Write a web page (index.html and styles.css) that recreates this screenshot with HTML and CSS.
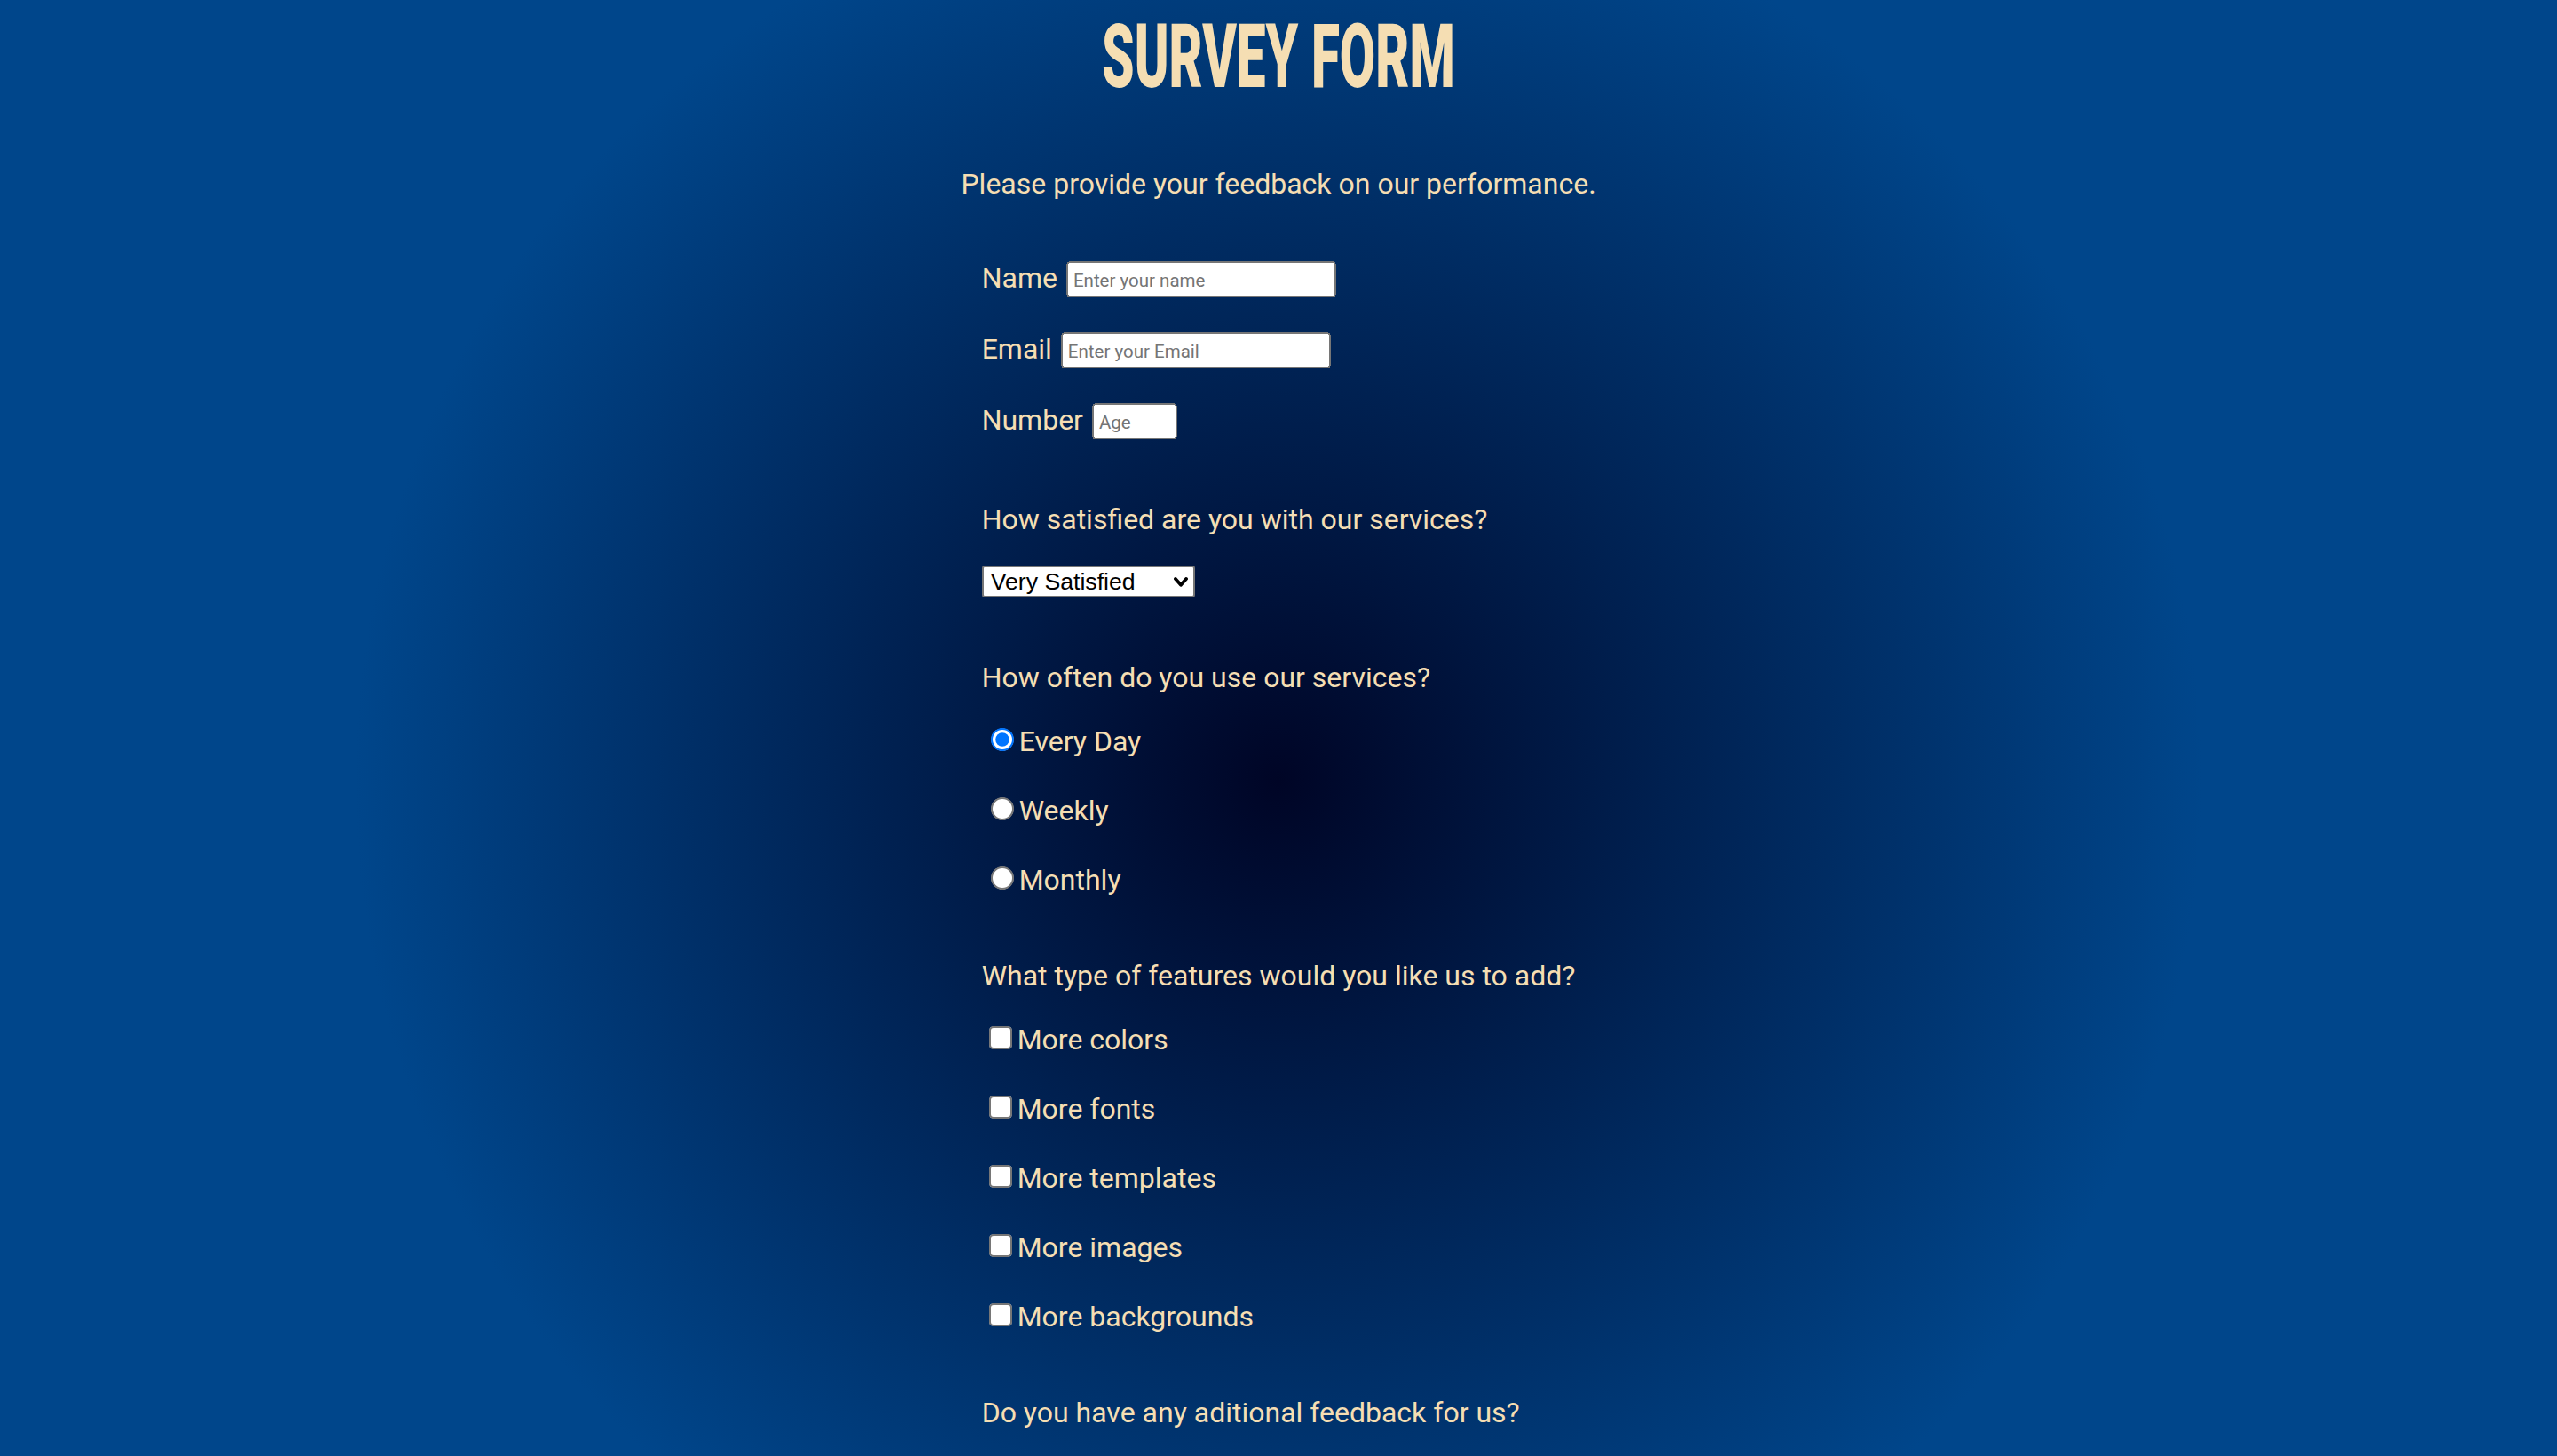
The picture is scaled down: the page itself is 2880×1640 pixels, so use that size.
FILE: index.html
```html
<!DOCTYPE html>
<html lang="en">
<head>
<meta charset="utf-8">
<title>Survey Form</title>
<link rel="stylesheet" href="styles.css">
</head>
<body>
  <h1 class="title"><span class="title-text">Survey Form</span></h1>
  <p class="intro">Please provide your feedback on our performance.</p>
  <form class="survey">
    <div class="field">
      <label for="name">Name</label>
      <input id="name" class="text-input" type="text" placeholder="Enter your name">
    </div>
    <div class="field">
      <label for="email">Email</label>
      <input id="email" class="text-input" type="email" placeholder="Enter your Email">
    </div>
    <div class="field">
      <label for="age">Number</label>
      <input id="age" class="text-input age-input" type="number" min="1" max="120" placeholder="Age">
    </div>

    <p class="question question-first">How satisfied are you with our services?</p>
    <span class="select-wrap">
      <select class="rating" name="rating">
        <option>Very Satisfied</option>
        <option>Satisfied</option>
        <option>Neutral</option>
        <option>Unsatisfied</option>
        <option>Very Unsatisfied</option>
      </select>
      <svg class="select-arrow" width="8" height="6" viewBox="0 0 8 6" aria-hidden="true">
        <polyline points="1,1 4,4.4 7,1" fill="none" stroke="#000" stroke-width="1.9" stroke-linecap="round" stroke-linejoin="round"/>
      </svg>
    </span>

    <p class="question">How often do you use our services?</p>
    <label class="option"><input type="radio" name="often" value="daily" checked>Every Day</label>
    <label class="option"><input type="radio" name="often" value="weekly">Weekly</label>
    <label class="option"><input type="radio" name="often" value="monthly">Monthly</label>

    <p class="question">What type of features would you like us to add?</p>
    <label class="option"><input type="checkbox" name="features" value="colors">More colors</label>
    <label class="option"><input type="checkbox" name="features" value="fonts">More fonts</label>
    <label class="option"><input type="checkbox" name="features" value="templates">More templates</label>
    <label class="option"><input type="checkbox" name="features" value="images">More images</label>
    <label class="option"><input type="checkbox" name="features" value="backgrounds">More backgrounds</label>

    <p class="question">Do you have any aditional feedback for us?</p>
    <textarea class="feedback" name="feedback" rows="4"></textarea>
    <button class="submit" type="submit">Submit</button>
  </form>
</body>
</html>
```

FILE: styles.css
```css
html {
  zoom: 2;
  min-height: 100%;
  background: radial-gradient(circle at 50% 440px, #000526 0, #00468b 520px);
}

body {
  margin: 0;
  font-family: Roboto, "Liberation Sans", sans-serif;
  font-size: 16px;
  color: wheat;
}

.title {
  margin: 7px 0 0;
  font-family: Roboto, "Liberation Sans", sans-serif;
  font-weight: 900;
  font-size: 50px;
  line-height: 50px;
  text-align: center;
  text-transform: uppercase;
}

.title-text {
  display: inline-block;
  transform: scaleX(0.585);
}

.intro {
  margin: 37px 0 0;
  line-height: 19px;
  text-align: center;
}

.survey {
  width: fit-content;
  margin: 33px auto 0;
  padding-bottom: 40px;
}

.field {
  display: flex;
  align-items: center;
  gap: 5px;
  height: 21px;
  line-height: 19px;
}

.field + .field {
  margin-top: 19px;
}

.text-input {
  box-sizing: border-box;
  width: 152px;
  height: 20.5px;
  margin-top: 1px;
  padding: 2.5px 2px 0.5px;
  font-family: Roboto, "Liberation Sans", sans-serif;
  font-size: 10.25px;
}

.age-input {
  width: 48px;
}

.question {
  margin: 35px 0 0;
  line-height: 19px;
}

.question-first {
  margin-top: 36px;
}

.select-wrap {
  position: relative;
  display: block;
  width: 120px;
  margin-top: 16.5px;
}

.rating {
  display: block;
  box-sizing: border-box;
  width: 120px;
  height: 18px;
  margin: 0;
  padding: 0 16px 0 4px;
  appearance: none;
  background: #fff;
  color: #000;
  border: 1px solid #767676;
  border-radius: 1.5px;
  font-family: "Liberation Sans", Arial, sans-serif;
  font-size: 13.333px;
}

.select-arrow {
  position: absolute;
  right: 4px;
  top: 6.3px;
  pointer-events: none;
}

.select-wrap + .question {
  margin-top: 35.5px;
}

.option {
  display: block;
  line-height: 19px;
  margin-top: 19px;
}

.question + .option {
  margin-top: 16px;
}

.feedback {
  display: block;
  margin-top: 40px;
}

.submit {
  display: block;
  margin-top: 16px;
}
```
